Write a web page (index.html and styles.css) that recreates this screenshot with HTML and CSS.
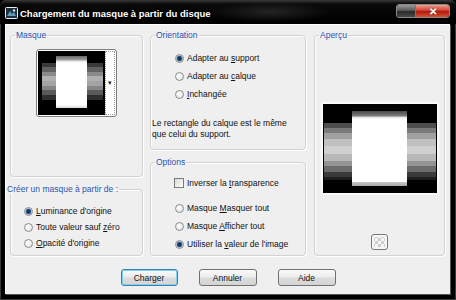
FILE: index.html
```html
<!DOCTYPE html>
<html lang="fr">
<head>
  <meta charset="UTF-8" />
  <title>Chargement du masque à partir du disque</title>
  <link rel="stylesheet" href="styles.css">
</head>
<body>
  <div class="window">
    <!-- Title bar -->
    <div class="titlebar">
      <svg class="app-icon" width="13" height="12" viewBox="0 0 13 12">
        <rect x="0.5" y="0.5" width="12" height="11" rx="1" fill="#1d2f3f" stroke="#e8eef2"/>
        <path d="M2 9 L5 4 L7 7 L9 5 L11 9 Z" fill="#5f9bb8"/>
        <circle cx="9" cy="3.5" r="1.2" fill="#cfe3ec"/>
      </svg>
      <span class="title">Chargement du masque à partir du disque</span>
      <div class="caption-buttons">
        <span class="cap-btn cap-min"></span>
        <span class="cap-btn cap-close">✕</span>
      </div>
    </div>

    <div class="client">
      <div class="groups">
        <div class="col">
          <fieldset class="group group-mask">
            <legend>Masque</legend>
            <div class="mask-picker">
              <div class="mask-thumb"><div class="sheet"></div></div>
              <div class="picker-drop">▾</div>
            </div>
          </fieldset>

          <fieldset class="group group-source">
            <legend class="legend-wide">Créer un masque à partir de :</legend>
            <div class="opts opts-source">
              <label class="opt"><input type="radio" name="src" checked><span><u>L</u>uminance d'origine</span></label>
              <label class="opt"><input type="radio" name="src"><span>Toute valeur sauf <u>z</u>éro</span></label>
              <label class="opt"><input type="radio" name="src"><span><u>O</u>pacité d'origine</span></label>
            </div>
          </fieldset>
        </div>

        <div class="col">
          <fieldset class="group group-orient">
            <legend>Orientation</legend>
            <div class="opts opts-orient">
              <label class="opt"><input type="radio" name="ori" checked><span>Adapter au <u>s</u>upport</span></label>
              <label class="opt"><input type="radio" name="ori"><span>Adapter au <u>c</u>alque</span></label>
              <label class="opt"><input type="radio" name="ori"><span><u>I</u>nchangée</span></label>
            </div>
            <p class="note">Le rectangle du calque est le même<br>que celui du support.</p>
          </fieldset>

          <fieldset class="group group-options">
            <legend>Options</legend>
            <div class="opts opts-options">
              <label class="opt"><input type="checkbox"><span>Inverser la <u>t</u>ransparence</span></label>
              <div class="opt-gap"></div>
              <label class="opt"><input type="radio" name="opt"><span>Masque <u>M</u>asquer tout</span></label>
              <label class="opt"><input type="radio" name="opt"><span>Masque <u>A</u>fficher tout</span></label>
              <label class="opt"><input type="radio" name="opt" checked><span>Utiliser la <u>v</u>aleur de l'image</span></label>
            </div>
          </fieldset>
        </div>

        <fieldset class="group group-preview">
          <legend>Aperçu</legend>
          <div class="preview-frame">
            <div class="preview-img"><div class="sheet"></div></div>
          </div>
          <div class="checker-btn"></div>
        </fieldset>
      </div>

      <div class="actions">
        <button class="btn btn-default">Charger</button>
        <button class="btn">Annuler</button>
        <button class="btn">Aide</button>
      </div>
    </div>
  </div>
</body>
</html>
```

FILE: styles.css
```css
* {
  box-sizing: border-box;
}

body {
  margin: 0;
  background: #000;
  font-family: "Liberation Sans", Arial, sans-serif;
  font-size: 8.5px;
  color: #111;
}

.window {
  width: 456px;
  height: 300px;
  display: flex;
  flex-direction: column;
  background: #000;
  border-radius: 6px 6px 0 0;
  box-shadow: inset 0 0 0 1px #3a3a3a;
}

/* title bar */
.titlebar {
  height: 24px;
  display: flex;
  align-items: flex-start;
  padding: 0 6px 0 5px;
  border-radius: 6px 6px 0 0;
  background:
    radial-gradient(ellipse 60px 10px at 270px 12px, rgba(90, 90, 90, 0.35), transparent),
    linear-gradient(#3a3a3a, #0a0a0a 4px, #000 22px);
}

.app-icon {
  margin-top: 7px;
}

.title {
  margin: 8px 0 0 2px;
  line-height: 11px;
  font-size: 9.5px;
  font-weight: bold;
  color: #fff;
  text-shadow: 0 0 3px #000;
}

.caption-buttons {
  display: flex;
  margin: 4px 0 0 auto;
  height: 14px;
  border: 1px solid #8a8a8a;
  border-radius: 3px;
  overflow: hidden;
}

.cap-btn {
  display: flex;
  align-items: center;
  justify-content: center;
}

.cap-min {
  width: 19px;
  border-right: 1px solid #777;
  background: linear-gradient(#9a9a9a, #5a5a5a 45%, #2a2a2a 55%, #4a4a4a);
}

.cap-close {
  width: 33px;
  color: #fff;
  font-size: 10px;
  font-weight: bold;
  text-shadow: 0 0 2px #600, 0 0 1px #fff;
  background: linear-gradient(#f0a090, #d04030 45%, #b01a10 55%, #d85030);
}

/* client area */
.client {
  flex: 1;
  margin: 0 6px 6px 5px;
  padding: 6px 4px 0 5px;
  background: #efefef;
  box-shadow: inset 1px 1px 0 #fff, 1px 1px 0 #555;
}

.groups {
  display: grid;
  grid-template-columns: 133px 156px 132px;
  column-gap: 7px;
  height: 226px;
}

.col {
  display: flex;
  flex-direction: column;
  gap: 7px;
}

.group {
  margin: 0;
  padding: 0;
  min-width: 0;
  border: 1px solid #d2d2d2;
  border-radius: 4px;
  box-shadow: 1px 1px 0 #fff, inset 1px 1px 0 #fff;
}

.group legend {
  margin-left: 4px;
  padding: 0 1px;
  line-height: 10px;
  color: #2a4fb0;
}

.group .legend-wide {
  margin-left: -5px;
}

.group-mask { height: 147px; }
.group-source { height: 72px; }
.group-orient { height: 120px; }
.group-options { height: 99px; }
.group-preview { height: 226px; margin-left: 1px; }

/* mask picker */
.mask-picker {
  display: flex;
  width: 81px;
  height: 68px;
  margin: 9px auto 0;
  padding: 1px;
  border: 1px solid #7e7e7e;
  border-radius: 3px;
  background: #fff;
}

.mask-thumb {
  width: 67px;
  display: flex;
  justify-content: center;
  padding-top: 5px;
  background:
    linear-gradient(#3a3a3a 0 12%, #626262 12% 24%, #8a8a8a 24% 36%, #b0b0b0 36% 50%,
      #a4a4a4 50% 62%, #868686 62% 74%, #5a5a5a 74% 87%, #2e2e2e 87%) 4px 12px / 61px 37px no-repeat,
    #000;
}

.mask-thumb .sheet {
  width: 31px;
  height: 52px;
  background: linear-gradient(#6a6a6a, #a0a0a0 4px, #e6e6e6 5px, #fff 7px, #fff 94%, #d8d8d8);
}

.picker-drop {
  flex: 1;
  display: flex;
  align-items: center;
  justify-content: center;
  border: 1px dotted #9a9a9a;
  font-size: 7px;
  color: #222;
}

/* radios and checkboxes */
.opts {
  display: flex;
  flex-direction: column;
}

.opt {
  display: flex;
  align-items: center;
  height: 18px;
  white-space: nowrap;
}

.opt input {
  appearance: none;
  flex: none;
  width: 9px;
  height: 9px;
  margin: 0 3px 0 0;
  border: 1px solid #8c8c8c;
  border-radius: 50%;
  background: radial-gradient(circle at 40% 40%, #fff, #dcdcdc);
}

.opt input:checked {
  background: radial-gradient(circle, #163a68 0 1.8px, #4a7aae 2.6px, #f2f2f2 3.4px, #dcdcdc);
}

.opt input[type="checkbox"] {
  width: 10px;
  height: 10px;
  border-radius: 0;
  border-color: #7a7a7a;
  background: linear-gradient(135deg, #d8d8d8, #fff);
}

.opts-source {
  margin-top: 9px;
  padding-left: 13px;
}

.opts-source .opt {
  height: 16px;
}

.opts-orient {
  margin-top: 9px;
  padding-left: 24px;
}

.note {
  margin: 15px 0 0 1px;
  line-height: 11px;
}

.opts-options {
  margin-top: 7px;
  padding-left: 24px;
}

.opts-options .opt:first-child {
  margin-left: -1px;
}

.opt-gap {
  height: 7px;
}

/* preview */
.preview-frame {
  width: 118px;
  height: 93px;
  margin: 62px auto 0;
  padding: 2px;
  border-radius: 2px;
  background: #fafafa;
}

.preview-img {
  height: 89px;
  display: flex;
  justify-content: center;
  padding-top: 7px;
  background:
    linear-gradient(#4e4e4e 0 9%, #7a7a7a 9% 18%, #a0a0a0 18% 28%, #c0c0c0 28% 40%, #d0d0d0 40% 55%,
      #b8b8b8 55% 66%, #949494 66% 76%, #6c6c6c 76% 86%, #3a3a3a 86% 94%, #1e1e1e 94%) 1px 19px / 112px 57px no-repeat,
    #000;
}

.preview-img .sheet {
  width: 55px;
  height: 75px;
  background: linear-gradient(#4a4a4a, #7c7c7c 5px, #dcdcdc 6px, #fff 8px, #fff 94%, #c4c4c4 95%, #a8a8a8);
}

.checker-btn {
  width: 17px;
  height: 16px;
  margin: 39px auto 0;
  border: 1px solid #777;
  border-radius: 3px;
  box-shadow: inset 0 0 0 2px #f6f6f6;
  background: repeating-conic-gradient(#cfcfcf 0 25%, #f4f4f4 0 50%) 0 0 / 6px 6px;
}

/* buttons */
.actions {
  display: flex;
  justify-content: center;
  gap: 21px;
  margin-top: 13px;
}

.btn {
  width: 58px;
  height: 17px;
  padding: 0;
  font-family: inherit;
  font-size: 8.5px;
  color: #111;
  border: 1px solid #707070;
  border-radius: 3px;
  background: linear-gradient(#fafafa, #ececec 48%, #dcdcdc 52%, #d4d4d4);
}

.btn-default {
  width: 57px;
  border-color: #3c7fb1;
  box-shadow: inset 0 0 0 1px #7fd0f4;
}
```
